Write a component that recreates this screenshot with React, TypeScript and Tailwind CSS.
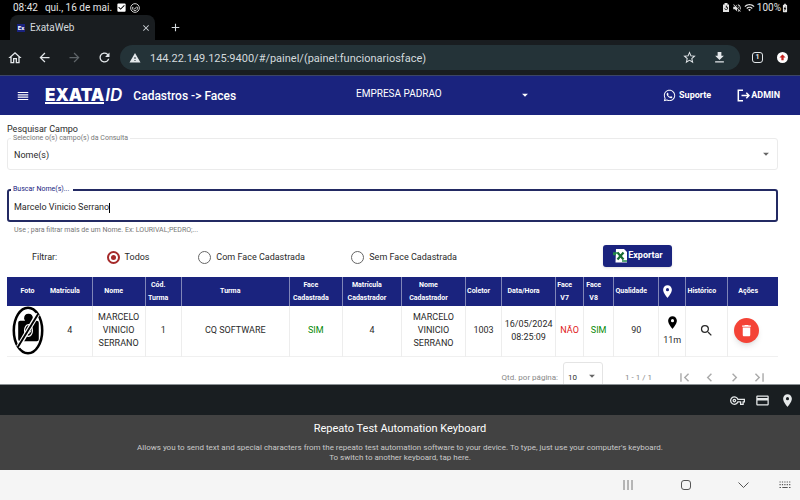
import { useState } from "react";
import type { ReactNode } from "react";
import {
  MdAdd, MdArrowBack, MdArrowDropDown, MdArrowForward, MdBatteryChargingFull, MdCheckBox,
  MdChevronLeft, MdChevronRight, MdClose, MdCreditCard, MdDelete, MdFirstPage, MdGetApp, MdLastPage,
  MdLocationOn, MdOutlineHome, MdOutlineVpnKey, MdRefresh, MdReorder, MdSearch, MdStarBorder,
  MdVolumeOff, MdWarning, MdWifi,
} from "react-icons/md";
import { FaWhatsapp } from "react-icons/fa";

function StatusBar() {
  return (
    <div className="flex h-[15px] shrink-0 items-center bg-black pl-[13px] pr-[10px] text-[10px] text-[#e4e4e4]">
      <span>08:42</span>
      <span className="ml-[7px]">qui., 16 de mai.</span>
      <MdCheckBox className="ml-1 size-[11px] text-white" />
      <svg viewBox="0 0 12 12" className="ml-[3px] size-[10px]" fill="none" stroke="currentColor">
        <circle cx="6" cy="6" r="5.2" strokeWidth="1.1" />
        <path d="M3.4 4.6 A3 3 0 1 0 8.6 4.6" strokeWidth="1" />
        <path d="M4.3 6 L5.7 7.3 L8 4.4" strokeWidth="1" />
      </svg>
      <div className="ml-auto flex items-center gap-[2px]">
        <svg viewBox="0 0 10 12" className="h-[9px] w-2" fill="currentColor">
          <path d="M3 0h4v2h2v10H1V2h2z" />
          <path d="M3.2 7a2 2 0 1 0 2-2.2M5.4 3.4v3" stroke="#000" fill="none" />
        </svg>
        <MdVolumeOff className="size-[10px]" />
        <MdWifi className="size-[11px]" />
        <span>100%</span>
        <MdBatteryChargingFull className="-ml-[3px] size-[10px]" />
      </div>
    </div>
  );
}

function TabStrip() {
  return (
    <div className="flex h-[25px] shrink-0 items-stretch bg-black pl-[10px] text-[#d5dade]">
      <div className="flex w-[145px] items-center rounded-t-lg bg-[#191d20] pl-[7px] pr-1">
        <span className="flex size-2 items-center justify-center bg-[#1a237e] text-[6px] font-bold text-white">Ex</span>
        <span className="ml-[5px] text-[10px]">ExataWeb</span>
        <button aria-label="Fechar guia" className="ml-auto"><MdClose className="size-[10px]" /></button>
      </div>
      <button aria-label="Nova guia" className="ml-[14px]"><MdAdd className="size-[13px]" /></button>
    </div>
  );
}

function Toolbar() {
  return (
    <div className="flex h-[35px] shrink-0 items-center bg-[#191d20] pl-[7px] pr-3 text-[#e3e7ea]">
      <button aria-label="Início"><MdOutlineHome className="size-4" /></button>
      <button aria-label="Voltar" className="ml-[14px]"><MdArrowBack className="size-[15px]" /></button>
      <button aria-label="Avançar" className="ml-[15px] text-[#5e6468]"><MdArrowForward className="size-[15px]" /></button>
      <button aria-label="Recarregar" className="ml-[15px]"><MdRefresh className="size-[15px]" /></button>
      <div className="ml-2 flex h-[25px] flex-1 items-center rounded-full bg-[#243338] pl-[9px] pr-[13px]">
        <MdWarning className="size-3" />
        <input
          aria-label="Endereço"
          readOnly
          value="144.22.149.125:9400/#/painel/(painel:funcionariosface)"
          className="ml-[9px] h-[19px] min-w-0 flex-1 bg-transparent pt-[2px] text-[11px] text-[#d3dadd] outline-none"
        />
        <button aria-label="Favorito"><MdStarBorder className="size-[15px]" /></button>
        <button aria-label="Baixar" className="ml-[15px]"><MdGetApp className="size-[15px]" /></button>
      </div>
      <button aria-label="Guias" className="ml-3 flex size-[11px] items-center justify-center rounded-[3px] border border-[#e3e7ea] text-[7px] font-bold">1</button>
      <button aria-label="Atualizar" className="ml-[14px] flex size-[11px] items-center justify-center rounded-full bg-white text-[#c5221f]">
        <svg viewBox="0 0 8 8" className="size-[7px]" fill="currentColor"><path d="M4 .5 7.500 4H5.300v3H2.700V4H.5z" /></svg>
      </button>
    </div>
  );
}

function Header() {
  return (
    <header className="flex h-10 shrink-0 items-center border-t border-[#3c4566] bg-[#1a237e] text-white">
      <div className="flex w-[44.5%] items-center pl-4">
        <button aria-label="Menu"><MdReorder className="size-[14px]" /></button>
        <div className="ml-[15px] flex items-start font-['Inter',sans-serif] text-[17px] leading-[14px]">
          <span className="border-b-2 border-white font-black">EXATA</span>
          <span className="ml-px font-semibold italic">ID</span>
        </div>
        <h1 className="ml-[11px] whitespace-nowrap text-[12px] font-medium">Cadastros -&gt; Faces</h1>
      </div>
      <div className="relative w-[22%]">
        <select aria-label="Empresa" className="block h-4 w-full appearance-none bg-transparent pb-1 text-[10px] leading-3 outline-none">
          <option>EMPRESA PADRAO</option>
        </select>
        <MdArrowDropDown className="pointer-events-none absolute right-0 top-0 size-[14px]" />
      </div>
      <div className="flex flex-1 items-center justify-end gap-[26px] pr-5 text-[9px] font-bold">
        <a href="#suporte" className="flex items-center gap-[3px]"><FaWhatsapp className="size-[13px]" />Suporte</a>
        <a href="#sair" className="flex items-center gap-px">
          <svg viewBox="0 0 13 13" className="size-[13px]" fill="none" stroke="currentColor" strokeWidth="1.5">
            <path d="M6 1.3H1.3v10.4H6M4.5 6.5H12M9.3 3.8 12 6.5 9.3 9.2" />
          </svg>
          ADMIN
        </a>
      </div>
    </header>
  );
}

function Filters() {
  const [name, setName] = useState("Marcelo Vinicio Serrano");
  const [face, setFace] = useState("Todos");
  return (
    <form className="text-[9px]">
      <p className="leading-[14px]">Pesquisar Campo</p>
      <div className="relative mt-[2px]">
        <label htmlFor="campo" className="absolute left-1 -top-1 bg-white px-[2px] text-[7px] leading-2 text-[#777]">
          Selecione o(s) campo(s) da Consulta
        </label>
        <select id="campo" className="block h-8 w-full appearance-none rounded-[3px] border border-[#ebebeb] bg-white pl-[6px] pt-1 outline-none">
          <option>Nome(s)</option>
        </select>
        <MdArrowDropDown className="pointer-events-none absolute right-[5px] top-[9px] size-[14px] text-[#666]" />
      </div>
      <div className="relative mt-[19px]">
        <label htmlFor="nome" className="absolute left-1 -top-1 bg-white px-[2px] pr-1 text-[7px] leading-2 text-[#1a237e]">
          Buscar Nome(s)...
        </label>
        <div className="flex h-[33px] items-center rounded-[3px] border-2 border-[#232a63] pl-[5px] pt-1">
          <input
            id="nome"
            value={name}
            onChange={(e) => setName(e.target.value)}
            className="min-w-0 bg-transparent outline-none [field-sizing:content]"
          />
          <span className="h-[10px] w-px bg-black" />
        </div>
      </div>
      <p className="mt-1 pl-[7px] text-[7px] leading-2 text-[#777]">Use ; para filtrar mais de um Nome. Ex: LOURIVAL;PEDRO;...</p>
      <div className="relative mt-[10px] flex h-[23px] items-center pl-[25px] pt-1">
        <span className="w-[10%]">Filtrar:</span>
        {[
          ["Todos", "w-[12.3%]"],
          ["Com Face Cadastrada", "w-[20.5%]"],
          ["Sem Face Cadastrada", "w-[33.8%]"],
        ].map(([label, width]) => (
          <label key={label} className={`flex shrink-0 items-center gap-[5px] ${width}`}>
            <input
              type="radio"
              name="face"
              checked={face === label}
              onChange={() => setFace(label)}
              className="size-[13px] appearance-none rounded-full border border-[#666] checked:border-2 checked:border-[#a52a2a] checked:bg-[#a52a2a] checked:bg-clip-content checked:p-[2px]"
            />
            {label}
          </label>
        ))}
        <button type="button" className="-mt-1 flex h-[22px] w-[69px] shrink-0 items-center justify-center gap-px rounded-[3px] bg-[#1a237e] font-bold text-white shadow">
          <svg viewBox="0 0 14 14" className="size-[14px]">
            <path d="M3 0h8l3 3v10.5H2.500z" fill="#fff" />
            <path d="M4.500 3.500 10.500 10.500M10.500 3.500 4.500 10.500" stroke="#176c34" strokeWidth="2.200" />
            <path d="M0 4h5M0 5.500h3M9 12h5" stroke="#238847" strokeWidth="1.500" />
          </svg>
          Exportar
        </button>
      </div>
    </form>
  );
}

function NoPhoto() {
  return (
    <svg viewBox="0 0 32 50" className="mx-auto block h-[49px] w-8" role="img" aria-label="Sem foto">
      <ellipse cx="16" cy="25" rx="14.500" ry="23.300" fill="#fff" stroke="#000" strokeWidth="2.600" />
      <path d="M12 13q0-5 4.500-5t4.500 5l-1 2h5q2 0 2 2v17q0 2-2 2H8q-2 0-2-2V17q0-2 2-2h5z" fill="#000" />
      <ellipse cx="16.500" cy="25" rx="4" ry="6" fill="none" stroke="#fff" strokeWidth="1.200" />
      <path d="M15 28q3 1 4-3" fill="none" stroke="#fff" />
      <path d="M26 8 6 42" stroke="#fff" strokeWidth="4.500" />
      <path d="M26.500 8 5.500 42" stroke="#000" strokeWidth="2" />
    </svg>
  );
}

type Column = { head: ReactNode; cell: ReactNode; width: number };

const columns: Column[] = [
  { width: 41, head: "Foto", cell: <NoPhoto /> },
  { width: 44, head: "Matrícula", cell: "4" },
  { width: 53, head: "Nome", cell: <>MARCELO<br />VINICIO<br />SERRANO</> },
  { width: 36, head: <>Cód.<br />Turma</>, cell: "1" },
  { width: 108, head: "Turma", cell: "CQ SOFTWARE" },
  { width: 53, head: <>Face<br />Cadastrada</>, cell: <span className="text-[#078a07]">SIM</span> },
  { width: 59, head: <>Matrícula<br />Cadastrador</>, cell: "4" },
  { width: 64, head: <>Nome<br />Cadastrador</>, cell: <>MARCELO<br />VINICIO<br />SERRANO</> },
  { width: 36, head: "Coletor", cell: "1003" },
  { width: 54, head: "Data/Hora", cell: <>16/05/2024<br />08:25:09</> },
  { width: 28, head: <>Face<br />V7</>, cell: <span className="text-[#e02020]">NÃO</span> },
  { width: 30, head: <>Face<br />V8</>, cell: <span className="text-[#078a07]">SIM</span> },
  { width: 45, head: "Qualidade", cell: "90" },
  {
    width: 27,
    head: <MdLocationOn className="mx-auto size-[15px]" aria-label="Localização" />,
    cell: <><MdLocationOn className="mx-auto mb-1 size-[15px] text-black" />11m</>,
  },
  {
    width: 42,
    head: "Histórico",
    cell: <button aria-label="Ver histórico" className="block w-full"><MdSearch className="mx-auto size-[15px]" /></button>,
  },
  {
    width: 50,
    head: "Ações",
    cell: (
      <button aria-label="Excluir" className="mx-auto flex size-[25px] items-center justify-center rounded-full bg-[#f44336] text-white shadow-md">
        <MdDelete className="size-[15px]" />
      </button>
    ),
  },
];

function FacesTable() {
  return (
    <table className="mt-[10px] w-full table-fixed border-collapse text-center">
      <colgroup>
        {columns.map((c, i) => <col key={i} style={{ width: c.width }} />)}
      </colgroup>
      <thead>
        <tr className="h-[29px] bg-[#1a237e] text-[7px] leading-[13px] text-white">
          {columns.map((c, i) => (
            <th key={i} className={`whitespace-nowrap p-0 font-bold ${i > 1 ? "border-l border-[#8086b8]" : ""} ${i > 0 ? "pr-[10px]" : ""}`}>
              <div className="flex justify-center">
                <span>{c.head}</span>
              </div>
            </th>
          ))}
        </tr>
      </thead>
      <tbody>
        <tr className="h-[50px] border-b border-[#f0f0f0] text-[9px] leading-[13px]">
          {columns.map((c, i) => (
            <td key={i} className={`p-0 ${i > 1 ? "border-l border-[#ededed]" : ""} ${i === 15 ? "pr-[14px]" : ""}`}>{c.cell}</td>
          ))}
        </tr>
      </tbody>
    </table>
  );
}

function Paginator() {
  return (
    <div className="flex items-center justify-end pr-[10px] pt-[5px] text-[8px] text-[#888]">
      <label htmlFor="porPagina">Qtd. por página:</label>
      <div className="relative ml-[5px]">
        <select id="porPagina" className="block h-8 w-10 appearance-none rounded-[3px] border border-[#e4e4e4] bg-white pl-1 text-[8px] text-[#333] outline-none">
          <option>10</option>
        </select>
        <MdArrowDropDown className="pointer-events-none absolute right-1 top-[7px] size-[14px] text-[#666]" />
      </div>
      <span className="ml-[22px]">1 - 1 / 1</span>
      <div className="ml-6 flex gap-2 text-[#aaa]">
        <button aria-label="Primeira página"><MdFirstPage className="size-[17px]" /></button>
        <button aria-label="Página anterior"><MdChevronLeft className="size-[17px]" /></button>
        <button aria-label="Próxima página"><MdChevronRight className="size-[17px]" /></button>
        <button aria-label="Última página"><MdLastPage className="size-[17px]" /></button>
      </div>
    </div>
  );
}

function Keyboard() {
  return (
    <div className="shrink-0">
      <div className="flex h-[31px] items-center justify-end gap-[10px] border-t border-[#8b9194] bg-[#191e21] pr-[5px] text-[#e6e9ea]">
        <button aria-label="Senhas"><MdOutlineVpnKey className="size-[15px]" /></button>
        <button aria-label="Cartões"><MdCreditCard className="size-[15px]" /></button>
        <button aria-label="Endereços"><MdLocationOn className="size-[15px]" /></button>
      </div>
      <div className="h-[55px] bg-[#424242] pt-[7px] text-center">
        <p className="text-[11px] leading-[14px] text-white">Repeato Test Automation Keyboard</p>
        <p className="mt-[7px] text-[8px] leading-[10px] text-[#c9c9c9]">
          Allows you to send text and special characters from the repeato test automation software to your device. To type, just use your computer's keyboard.
          <br />
          To switch to another keyboard, tap here.
        </p>
      </div>
      <div className="flex h-[30px] items-center justify-end bg-[#f5f5f5] pr-[9px] text-[#555]">
        <button aria-label="Recentes">
          <svg viewBox="0 0 10 10" className="size-[10px]" stroke="currentColor" strokeWidth="0.8"><path d="M1 0v10M5 0v10M9 0v10" /></svg>
        </button>
        <button aria-label="Tela inicial" className="ml-12">
          <svg viewBox="0 0 10 10" className="size-[10px]" fill="none" stroke="currentColor"><rect x="0.500" y="0.500" width="9" height="9" rx="2.500" /></svg>
        </button>
        <button aria-label="Ocultar teclado" className="ml-[47px]">
          <svg viewBox="0 0 11 6" className="h-[6px] w-[11px]" fill="none" stroke="currentColor"><path d="M0.500 0.500 5.500 5.500 10.500 0.500" /></svg>
        </button>
        <button aria-label="Trocar teclado" className="ml-[30px]">
          <svg viewBox="0 0 12 8" className="h-2 w-3" stroke="currentColor" strokeWidth="1.200">
            <path d="M0.500 1h11M0.500 3.700h11" strokeDasharray="1.200 1.200" />
            <path d="M0.500 6.500h1.500M3.300 6.500h5.400M10 6.500h1.500" />
          </svg>
        </button>
      </div>
    </div>
  );
}

export default function App() {
  return (
    <div className="flex h-screen flex-col overflow-hidden bg-white font-['Roboto',sans-serif] text-[#2a2a2a]">
      <StatusBar />
      <TabStrip />
      <Toolbar />
      <Header />
      <main className="min-h-0 flex-1 overflow-hidden pl-[7px] pr-[22px] pt-[7px]">
        <Filters />
        <FacesTable />
        <Paginator />
      </main>
      <Keyboard />
    </div>
  );
}
